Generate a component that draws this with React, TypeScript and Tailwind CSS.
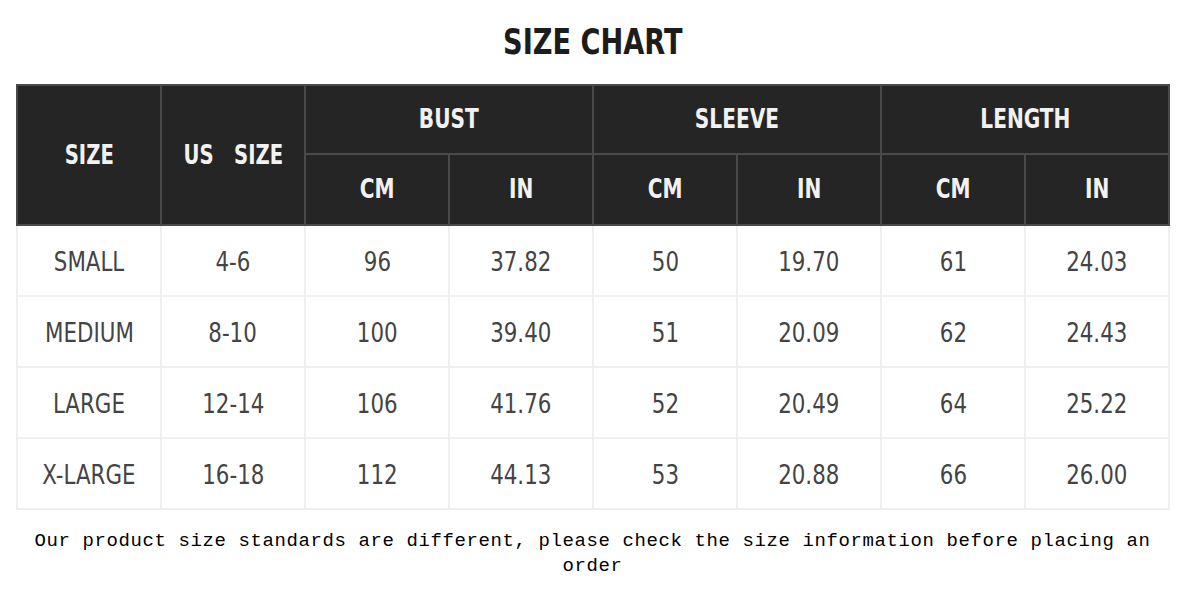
const rows = [
  ['SMALL', '4-6', '96', '37.82', '50', '19.70', '61', '24.03'],
  ['MEDIUM', '8-10', '100', '39.40', '51', '20.09', '62', '24.43'],
  ['LARGE', '12-14', '106', '41.76', '52', '20.49', '64', '25.22'],
  ['X-LARGE', '16-18', '112', '44.13', '53', '20.88', '66', '26.00'],
];

const narrow = "font-['DejaVu_Sans_Condensed','Liberation_Sans',sans-serif]";

// the chart's face is narrower than anything installed, so squeeze it a bit
function Squeeze({ children, k }: { children: React.ReactNode; k: string }) {
  return <span className={`inline-block whitespace-pre ${k}`}>{children}</span>;
}

function App() {
  const th = 'border-2 border-[#4a4a4a] text-[#f2f2f2] font-bold text-[26px] text-center align-middle';

  return (
    <div className="w-[1185px] h-[605px] bg-white">
      <h1 className={`${narrow} text-center font-bold text-[36px] text-[#1c1c1c] pt-[20px] leading-[44px]`}>
        <Squeeze k="scale-x-[0.84]">SIZE CHART</Squeeze>
      </h1>

      <table className={`${narrow} table-fixed w-[1152px] ml-[16px] mt-[20px] border-collapse`}>
        <colgroup>
          {Array.from({ length: 8 }).map((_, i) => (
            <col key={i} className="w-[144px]" />
          ))}
        </colgroup>
        <thead className="bg-[#252525]">
          <tr className="h-[69px]">
            <th rowSpan={2} className={th}><Squeeze k="scale-x-[0.84]">SIZE</Squeeze></th>
            <th rowSpan={2} className={th}><Squeeze k="scale-x-[0.84]">US   SIZE</Squeeze></th>
            <th colSpan={2} className={th}><Squeeze k="scale-x-[0.86]">BUST</Squeeze></th>
            <th colSpan={2} className={th}><Squeeze k="scale-x-[0.86]">SLEEVE</Squeeze></th>
            <th colSpan={2} className={th}><Squeeze k="scale-x-[0.86]">LENGTH</Squeeze></th>
          </tr>
          <tr className="h-[71px]">
            {['CM', 'IN', 'CM', 'IN', 'CM', 'IN'].map((t, i) => (
              <th key={i} className={th}><Squeeze k="scale-x-[0.86]">{t}</Squeeze></th>
            ))}
          </tr>
        </thead>
        <tbody>
          {rows.map((r) => (
            <tr key={r[0]} className="h-[71px]">
              {r.map((v, i) => (
                <td
                  key={i}
                  className="border-2 border-[#efefef] text-center align-middle text-[27px] text-[#444] pt-[3px]"
                >
                  <Squeeze k="scale-x-[0.88]">{v}</Squeeze>
                </td>
              ))}
            </tr>
          ))}
        </tbody>
      </table>

      <p className="font-['Liberation_Mono',monospace] text-[19px] tracking-[0.6px] leading-[25px] text-black text-center px-[20px] mt-[19px]">
        Our product size standards are different, please check the size information before placing an order
      </p>
    </div>
  );
}

export default App;
